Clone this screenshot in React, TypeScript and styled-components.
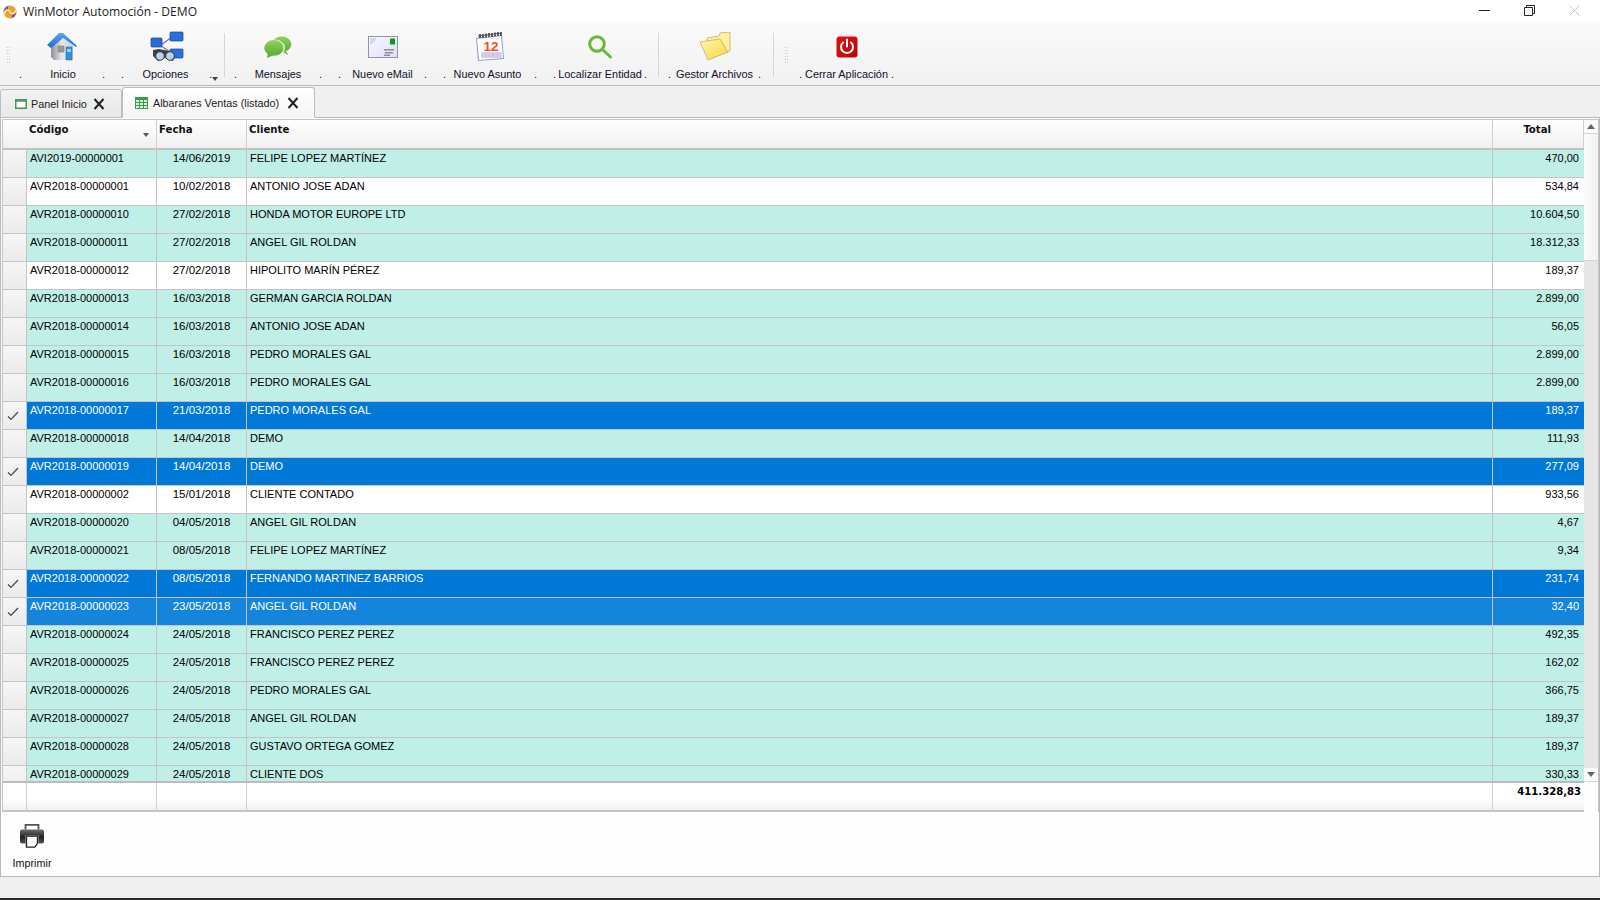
import React from "react";
import styled, { createGlobalStyle, css } from "styled-components";

const Global = createGlobalStyle`
  html, body { margin: 0; padding: 0; background: #f0f0f0; }
  * { box-sizing: border-box; }
`;

const UI = `"Liberation Sans", Arial, sans-serif`;
const BOLD = `"DejaVu Sans Condensed", "DejaVu Sans", sans-serif`;
const columns = css`
  display: grid;
  grid-template-columns: 24px 130px 90px 1fr 91px;
`;

const Page = styled.div`
  width: 1600px; height: 900px; overflow: hidden;
  display: flex; flex-direction: column;
  background: #f0f0f0; color: #000;
  font: 11px/16px ${UI};
`;
const TitleBar = styled.div`
  height: 23px; flex: none; background: #fff;
  display: flex; align-items: center; padding-left: 3px;
`;
const TitleText = styled.span`
  margin-left: 6px; font: 12.1px/16px "Open Sans", sans-serif; color: #222;
`;
const WindowControls = styled.div`
  margin-left: auto; display: flex; align-items: center; height: 100%;
  padding-right: 20px; gap: 34px; padding-bottom: 3px;
`;
const Toolbar = styled.div`
  height: 63px; flex: none;
  display: flex; align-items: flex-start;
  background: linear-gradient(#fafafa, #f1f1f1);
  border-bottom: 1px solid #b9b9b9;
`;
const Grip = styled.i<{ $left: number; $right: number }>`
  display: block; flex: none; width: 4px; height: 17px; margin: 23px ${p => p.$right}px 0 ${p => p.$left}px;
  background-image: radial-gradient(#bdbdbd 0.7px, transparent 0.8px);
  background-size: 2.5px 3px;
`;
const ToolGroup = styled.div`
  display: flex; gap: 16px;
`;
const ToolButton = styled.div<{ $w: number }>`
  width: ${p => p.$w}px; flex: none; padding-top: 8px;
  display: flex; flex-direction: column; align-items: center;
`;
const ToolIcon = styled.div`
  height: 32px; display: flex; align-items: center; justify-content: center;
`;
const ToolLabel = styled.div`
  margin-top: 4px; width: 100%; display: flex; justify-content: space-between;
  line-height: 14px; color: #10102a; white-space: nowrap; font-size: 10.9px;
`;
const ToolName = styled.span<{ $pl?: number; $pr?: number }>`
  padding: 0 ${p => p.$pr || 0}px 0 ${p => p.$pl || 0}px;
`;
const MenuArrow = styled.i`
  flex: none; width: 0; height: 0; margin: 54px 0 0 0;
  border-left: 3.5px solid transparent; border-right: 3.5px solid transparent;
  border-top: 4px solid #444;
`;
const ToolSep = styled.i<{ $l: number; $r: number }>`
  flex: none; width: 1px; height: 44px; margin: 10px ${p => p.$r}px 0 ${p => p.$l}px; background: #d6d6d6;
`;
const TabStrip = styled.div`
  height: 32px; flex: none; display: flex; align-items: flex-end; margin-bottom: -1px;
  position: relative; z-index: 1;
`;
const Tab = styled.div<{ $active?: boolean }>`
  display: flex; align-items: center; flex: none;
  height: ${p => (p.$active ? 31 : 29)}px;
  width: ${p => (p.$active ? 193 : 122)}px;
  padding-left: ${p => (p.$active ? 12 : 14)}px;
  gap: ${p => (p.$active ? 5 : 4)}px;
  border: 1px solid #bdbdbd; border-radius: 3px 3px 0 0;
  border-bottom: ${p => (p.$active ? "1px solid #f6f6f6" : "1px solid #bdbdbd")};
  background: ${p => (p.$active ? "linear-gradient(#ffffff, #f5f5f5)" : "linear-gradient(#f2f2f2, #e8e8e8)")};
  color: #222; font-size: 10.8px;
`;
const TabClose = styled.svg<{ $m: number }>`
  margin-left: ${p => p.$m}px; flex: none;
`;
const Panel = styled.div`
  flex: none; height: 760px; background: #fdfdfd;
  border: 1px solid #b9b9b9;
  display: flex; flex-direction: column;
`;
const GridFrame = styled.div`
  margin: 1px 0 0 1px; height: 693px; flex: none;
  border: 1px solid #c4c4c4; border-bottom: none;
  display: flex; flex-direction: column;
`;
const GridMain = styled.div`
  display: flex; flex: none; height: 661px;
`;
const GridTable = styled.div`
  width: 1581px; flex: none; display: flex; flex-direction: column;
`;
const HeaderRow = styled.div`
  ${columns}; height: 30px; flex: none;
  background: linear-gradient(#ffffff, #f0f0f0);
  border-bottom: 2px solid #c2c2c2;
  font: 700 11.3px/16px ${BOLD}; color: #111;
`;
const HeaderCell = styled.div<{ $span?: boolean; $right?: boolean }>`
  position: relative; padding: 2px 2px 0; border-right: 1px solid #cfcfcf;
  ${p => p.$span && "grid-column: span 2; padding-left: 26px;"}
  ${p => p.$right && "text-align: right; padding-right: 32px;"}
`;
const SortMark = styled.i`
  position: absolute; right: 7px; top: 13px; width: 0; height: 0;
  border-left: 3.5px solid transparent; border-right: 3.5px solid transparent;
  border-top: 4px solid #555;
`;
const RowsClip = styled.div`
  flex: none; height: 631px; overflow: hidden;
`;
const Row = styled.div<{ $kind: "teal" | "white" | "sel" | "cur" }>`
  ${columns}; height: 28px;
  border-bottom: 1px solid #c4c4c4;
  color: ${p => (p.$kind === "sel" || p.$kind === "cur" ? "#fff" : "#000")};
  background: ${p =>
    p.$kind === "teal" ? "#bfefe7" : p.$kind === "white" ? "#fff" : p.$kind === "sel" ? "#0078d7" : "#1585dc"};
`;
const RowHead = styled.div`
  background: linear-gradient(#f6f6f6, #ebebeb);
  border-right: 1px solid #c4c4c4;
  display: flex; align-items: center; justify-content: center; padding-right: 3px;
`;
const Cell = styled.div<{ $align?: "left" | "center" | "right" }>`
  padding: 0 3px; text-align: ${p => p.$align || "left"};
  border-right: 1px solid #c4c4c4; white-space: nowrap; overflow: hidden;
  ${p => p.$align === "right" && "padding-right: 5px; border-right: none;"}
  ${p => p.$align === "center" && "font-size: 11.5px;"}
  line-height: 17px;
`;
const FooterRow = styled.div`
  ${columns}; height: 31px; flex: none;
  border-top: 2px solid #bcbcbc; border-bottom: 2px solid #c4c4c4;
  background: linear-gradient(#ffffff 60%, #f0f0f0);
`;
const FooterCell = styled.div<{ $total?: boolean }>`
  border-right: 1px solid #cfcfcf;
  ${p => p.$total && `border-right: none; text-align: right; padding: 1px 3px 0 0; font: 700 11.2px/16px ${BOLD};`}
`;
const ScrollBar = styled.div`
  width: 14px; flex: none; height: 662px; display: flex; flex-direction: column; background: #e6e6e6;
`;
const ScrollButton = styled.div<{ $down?: boolean }>`
  height: 14px; flex: none; background: #fbfbfb; border-bottom: 1px solid #d4d4d4;
  display: flex; align-items: center; justify-content: center;
  &::before {
    content: ""; width: 0; height: 0;
    border-left: 4px solid transparent; border-right: 4px solid transparent;
    ${p => (p.$down ? "border-top: 5px solid #666;" : "border-bottom: 5px solid #666;")}
  }
`;
const ScrollThumb = styled.div`
  height: 127px; flex: none; background: linear-gradient(90deg, #fbfbfb, #f1f1f1); border-bottom: 1px solid #d4d4d4;
`;
const ScrollTrack = styled.div`
  flex: 1;
`;
const PrintBar = styled.div`
  flex: 1; padding: 12px 0 0 1px;
`;
const PrintButton = styled.div`
  width: 60px; display: flex; flex-direction: column; align-items: center; color: #111;
`;
const PrintLabel = styled.div`
  margin-top: 8px; line-height: 14px; font-size: 10.8px;
`;
const StatusGap = styled.div`
  flex: 1;
`;
const TaskEdge = styled.div`
  height: 2px; flex: none; background: #2a2a2a;
`;

const Logo = () => (
  <svg width="14" height="14" viewBox="0 0 14 14">
    <circle cx="7" cy="7" r="6.5" fill="#f0a030" />
    <path d="M7 .5A6.5 6.5 0 0 0 .5 7c2-3 3-3 4.500-1V.8z" fill="#6d5aa8" />
    <path d="M7 13.500A6.500 6.500 0 0 0 13.500 7c-2 3-3 3-4.500 1v5.200z" fill="#6d5aa8" />
    <path d="M1 9c2-5 4-5 6-2s4 2 6-2" stroke="#fff2c0" strokeWidth="1.300" fill="none" />
  </svg>
);

const HomeIcon = () => (
  <svg width="32" height="30" viewBox="0 0 32 30">
    <defs>
      <linearGradient id="hw" x1="0" x2="1"><stop offset="0" stopColor="#8b9097" /><stop offset=".5" stopColor="#e8e8e8" /><stop offset="1" stopColor="#c4c8cc" /></linearGradient>
      <linearGradient id="hr" x1="0" x2="0" y1="0" y2="1"><stop offset="0" stopColor="#5aa8f0" /><stop offset="1" stopColor="#1a6cc8" /></linearGradient>
    </defs>
    <path d="M5 14 16 5l11 9v14H8l-3-3z" fill="url(#hw)" />
    <path d="M1 13 13 1h4l14 13-1 1L17 6 5 16z" fill="url(#hr)" />
    <rect x="12" y="14" width="6" height="6" fill="#9a9a9a" stroke="#777" strokeWidth=".5" />
    <rect x="20" y="15" width="6" height="13" fill="#2d8fdc" stroke="#1c6fb0" strokeWidth=".5" />
    <rect x="21" y="17" width="4" height="3" fill="#9ad0f6" />
  </svg>
);
const OptionsIcon = () => (
  <svg width="34" height="32" viewBox="0 0 34 32">
    <path d="M11 14 22 6M11 15 22 22" stroke="#7a78b0" strokeWidth="1.400" />
    <rect x="1" y="7" width="11" height="9" rx="1" fill="#2a6bd8" stroke="#173f90" strokeWidth=".7" />
    <rect x="20" y="1" width="13" height="9" rx="1" fill="#2a70e0" stroke="#173f90" strokeWidth=".7" />
    <rect x="20" y="18" width="13" height="9" rx="1" fill="#2a70e0" stroke="#173f90" strokeWidth=".7" />
    <path d="M3 19 9 18 19 20 25 26 23 30 15 27 8 30 3 25z" fill="#3f3f3f" />
    <circle cx="10" cy="25" r="4.300" fill="#b9d2ee" stroke="#3a3a3a" />
    <circle cx="20" cy="25" r="4.300" fill="#b9d2ee" stroke="#3a3a3a" />
  </svg>
);
const ChatIcon = () => (
  <svg width="30" height="24" viewBox="0 0 32 26">
    <defs><linearGradient id="cg" x1="0" x2="0" y1="0" y2="1"><stop offset="0" stopColor="#8fd35a" /><stop offset="1" stopColor="#58ab32" /></linearGradient></defs>
    <ellipse cx="20" cy="10" rx="10.500" ry="8.500" fill="url(#cg)" />
    <path d="M23 16l4 5-1 .5-6-4z" fill="#6cbb3f" />
    <ellipse cx="12" cy="14" rx="11.500" ry="9" fill="#fff" opacity=".85" />
    <ellipse cx="11.500" cy="14" rx="10.500" ry="8.500" fill="url(#cg)" />
    <path d="M5 20l-1 5 7-3z" fill="#62b238" />
  </svg>
);
const MailIcon = () => (
  <svg width="30" height="22" viewBox="0 0 30 22">
    <defs><linearGradient id="mg" x1="0" x2="1" y1="0" y2="1"><stop offset="0" stopColor="#fbfbff" /><stop offset="1" stopColor="#dcdcf6" /></linearGradient></defs>
    <rect x=".5" y=".5" width="29" height="21" fill="url(#mg)" stroke="#9292b8" />
    <rect x="22" y="2.500" width="5" height="6" fill="#0c9a1c" />
    <path d="M2 3h6M2 5h5M2 7h3" stroke="#b8b8c0" />
    <path d="M16 13h10v1.500H16zM17 16h8v1.500h-8zM16 18.500h6V20h-6z" fill="#8e8e8e" />
  </svg>
);
const CalendarIcon = () => (
  <svg width="30" height="30" viewBox="0 0 30 30">
    <path d="M1 6 27 3l2 24-26 2z" fill="#9a9ac8" />
    <path d="M2 7 26 4l2 22-24 2z" fill="#fff" />
    <path d="M5 6V2M8 6V2M11 5.500v-4M14 5v-4M17 5v-4M20 4.500v-4M23 4v-4M26 4V0" stroke="#333" strokeWidth="1.500" />
    <path d="M3 4l24-3" stroke="#555" strokeWidth="1" />
    <rect x="6" y="20" width="21" height="6" fill="#d8d8f2" />
    <path d="M6 22h20M6 24h20M10 20v6M14 20v6M18 20v6M22 20v6" stroke="#b0a8c8" strokeWidth=".4" />
    <text x="16" y="19" textAnchor="middle" fontFamily='"Liberation Sans", sans-serif' fontWeight="700" fontSize="13.500" fill="#f0500c">12</text>
  </svg>
);
const SearchIcon = () => (
  <svg width="26" height="26" viewBox="0 0 26 26">
    <circle cx="10" cy="10" r="7.300" fill="none" stroke="#66b93a" strokeWidth="3" />
    <path d="M15.500 15.500 23.500 23" stroke="#66b93a" strokeWidth="3" strokeLinecap="round" />
  </svg>
);
const FolderIcon = () => (
  <svg width="32" height="30" viewBox="0 0 32 30">
    <defs><linearGradient id="fg" x1="0" x2="1" y1="0" y2="1"><stop offset="0" stopColor="#fff8b0" /><stop offset="1" stopColor="#f6d53c" /></linearGradient></defs>
    <path d="M8 6 20 4l1-3 10-1v19L10 27z" fill="#fdf0a0" stroke="#c9ae5a" strokeWidth=".8" />
    <path d="M1 10 21 7l8 13-20 8z" fill="url(#fg)" stroke="#c9ae5a" strokeWidth=".8" />
  </svg>
);
const PowerIcon = () => (
  <svg width="22" height="22" viewBox="0 0 22 22">
    <defs><linearGradient id="pg" x1="0" x2="1" y1="0" y2="1"><stop offset="0" stopColor="#e41010" /><stop offset="1" stopColor="#b80808" /></linearGradient></defs>
    <rect x=".5" y=".5" width="21" height="21" rx="3" fill="url(#pg)" />
    <path d="M7 6.500a6 6 0 1 0 8 0" fill="none" stroke="#fff" strokeWidth="2" strokeLinecap="round" />
    <path d="M11 3.500v7" stroke="#fff" strokeWidth="2" strokeLinecap="round" />
  </svg>
);
const PrinterIcon = () => (
  <svg width="26" height="24" viewBox="0 0 28 26">
    <defs><linearGradient id="prg" x1="0" x2="0" y1="0" y2="1"><stop offset="0" stopColor="#6c6c6c" /><stop offset=".55" stopColor="#222" /><stop offset="1" stopColor="#555" /></linearGradient></defs>
    <path d="M7 6V1h14v5" fill="#fff" stroke="#555" strokeWidth="2" />
    <path d="M3 6h22a2 2 0 0 1 2 2v11a2 2 0 0 1-2 2h-4V12H7v9H3a2 2 0 0 1-2-2V8a2 2 0 0 1 2-2z" fill="url(#prg)" />
    <path d="M8 13h12v8l-3 4H8z" fill="#fff" stroke="#222" strokeWidth="1.500" />
  </svg>
);
const PanelTabIcon = () => (
  <svg width="12" height="10" viewBox="0 0 12 10">
    <rect x=".75" y=".75" width="10.500" height="8.500" fill="#fff" stroke="#3f9a50" strokeWidth="1.500" />
    <path d="M1 2h10" stroke="#3f9a50" strokeWidth="1.500" />
  </svg>
);
const GridTabIcon = () => (
  <svg width="13" height="12" viewBox="0 0 13 12">
    <rect width="13" height="12" fill="#3f9a50" />
    <path d="M1 3h3v2H1zM5 3h3v2H5zM9 3h3v2H9zM1 6h3v2H1zM5 6h3v2H5zM9 6h3v2H9zM1 9h3v2H1zM5 9h3v2H5zM9 9h3v2H9z" fill="#d8f0dc" />
  </svg>
);
const CloseMark = ({ m }: { m: number }) => (
  <TabClose $m={m} width="12" height="12" viewBox="0 0 12 12">
    <path d="M1.500 1 10.500 11M10.500 1 1.500 11" stroke="#222" strokeWidth="2" />
  </TabClose>
);
const Check = () => (
  <svg width="12" height="10" viewBox="0 0 12 10">
    <path d="M1 5.500 4 8.500 11 1" fill="none" stroke="#444" strokeWidth="1.200" />
  </svg>
);

type Kind = "teal" | "white" | "sel" | "cur";
const rows: [string, string, string, string, Kind, boolean?][] = [
  ["AVI2019-00000001", "14/06/2019", "FELIPE LOPEZ MARTÍNEZ", "470,00", "teal"],
  ["AVR2018-00000001", "10/02/2018", "ANTONIO JOSE ADAN", "534,84", "white"],
  ["AVR2018-00000010", "27/02/2018", "HONDA MOTOR EUROPE LTD", "10.604,50", "teal"],
  ["AVR2018-00000011", "27/02/2018", "ANGEL GIL ROLDAN", "18.312,33", "teal"],
  ["AVR2018-00000012", "27/02/2018", "HIPOLITO MARÍN PÉREZ", "189,37", "white"],
  ["AVR2018-00000013", "16/03/2018", "GERMAN GARCIA ROLDAN", "2.899,00", "teal"],
  ["AVR2018-00000014", "16/03/2018", "ANTONIO JOSE ADAN", "56,05", "teal"],
  ["AVR2018-00000015", "16/03/2018", "PEDRO MORALES GAL", "2.899,00", "teal"],
  ["AVR2018-00000016", "16/03/2018", "PEDRO MORALES GAL", "2.899,00", "teal"],
  ["AVR2018-00000017", "21/03/2018", "PEDRO MORALES GAL", "189,37", "sel", true],
  ["AVR2018-00000018", "14/04/2018", "DEMO", "111,93", "teal"],
  ["AVR2018-00000019", "14/04/2018", "DEMO", "277,09", "sel", true],
  ["AVR2018-00000002", "15/01/2018", "CLIENTE CONTADO", "933,56", "white"],
  ["AVR2018-00000020", "04/05/2018", "ANGEL GIL ROLDAN", "4,67", "teal"],
  ["AVR2018-00000021", "08/05/2018", "FELIPE LOPEZ MARTÍNEZ", "9,34", "teal"],
  ["AVR2018-00000022", "08/05/2018", "FERNANDO MARTINEZ BARRIOS", "231,74", "sel", true],
  ["AVR2018-00000023", "23/05/2018", "ANGEL GIL ROLDAN", "32,40", "cur", true],
  ["AVR2018-00000024", "24/05/2018", "FRANCISCO PEREZ PEREZ", "492,35", "teal"],
  ["AVR2018-00000025", "24/05/2018", "FRANCISCO PEREZ PEREZ", "162,02", "teal"],
  ["AVR2018-00000026", "24/05/2018", "PEDRO MORALES GAL", "366,75", "teal"],
  ["AVR2018-00000027", "24/05/2018", "ANGEL GIL ROLDAN", "189,37", "teal"],
  ["AVR2018-00000028", "24/05/2018", "GUSTAVO ORTEGA GOMEZ", "189,37", "teal"],
  ["AVR2018-00000029", "24/05/2018", "CLIENTE DOS", "330,33", "teal"],
];

const Tool = ({ w, label, icon, pl, pr }: { w: number; label: string; icon: React.ReactNode; pl?: number; pr?: number }) => (
  <ToolButton $w={w}>
    <ToolIcon>{icon}</ToolIcon>
    <ToolLabel><span>.</span><ToolName $pl={pl} $pr={pr}>{label}</ToolName><span>.</span></ToolLabel>
  </ToolButton>
);

export default function App() {
  return (
    <Page>
      <Global />
      <TitleBar>
        <Logo />
        <TitleText>WinMotor Automoción - DEMO</TitleText>
        <WindowControls>
          <svg width="11" height="11" viewBox="0 0 11 11"><path d="M0 5.500h11" stroke="#222" /></svg>
          <svg width="11" height="11" viewBox="0 0 11 11"><path d="M.5 2.500h8v8h-8zM2.500 2.500v-2h8v8h-2" fill="none" stroke="#222" /></svg>
          <svg width="11" height="11" viewBox="0 0 11 11"><path d="M.5.500l10 10M10.500.500l-10 10" stroke="#c4c4c4" /></svg>
        </WindowControls>
      </TitleBar>
      <Toolbar>
        <Grip $left={6} $right={9} />
        <ToolGroup>
          <Tool w={86} label="Inicio" icon={<HomeIcon />} pl={2} />
          <Tool w={91} label="Opciones" icon={<OptionsIcon />} pr={2} />
        </ToolGroup>
        <MenuArrow />
        <ToolSep $l={6} $r={9} />
        <ToolGroup>
          <Tool w={88} label="Mensajes" icon={<ChatIcon />} />
          <Tool w={89} label="Nuevo eMail" icon={<MailIcon />} />
          <Tool w={94} label="Nuevo Asunto" icon={<CalendarIcon />} pr={5} />
          <Tool w={94} label="Localizar Entidad" icon={<SearchIcon />} />
        </ToolGroup>
        <ToolSep $l={11} $r={9} />
        <Tool w={93} label="Gestor Archivos" icon={<FolderIcon />} />
        <ToolSep $l={12} $r={10} />
        <Grip $left={0} $right={11} />
        <Tool w={95} label="Cerrar Aplicación" icon={<PowerIcon />} />
      </Toolbar>
      <TabStrip>
        <Tab><PanelTabIcon /><span>Panel Inicio</span><CloseMark m={2} /></Tab>
        <Tab $active><GridTabIcon /><span>Albaranes Ventas (listado)</span><CloseMark m={3} /></Tab>
      </TabStrip>
      <Panel>
        <GridFrame>
          <GridMain>
            <GridTable>
              <HeaderRow>
                <HeaderCell $span>Código<SortMark /></HeaderCell>
                <HeaderCell>Fecha</HeaderCell>
                <HeaderCell>Cliente</HeaderCell>
                <HeaderCell $right>Total</HeaderCell>
              </HeaderRow>
              <RowsClip>
                {rows.map(r => (
                  <Row key={r[0]} $kind={r[4]}>
                    <RowHead>{r[5] && <Check />}</RowHead>
                    <Cell>{r[0]}</Cell>
                    <Cell $align="center">{r[1]}</Cell>
                    <Cell>{r[2]}</Cell>
                    <Cell $align="right">{r[3]}</Cell>
                  </Row>
                ))}
              </RowsClip>
            </GridTable>
            <ScrollBar>
              <ScrollButton />
              <ScrollThumb />
              <ScrollTrack />
              <ScrollButton $down />
            </ScrollBar>
          </GridMain>
          <GridTable>
            <FooterRow>
              <FooterCell /><FooterCell /><FooterCell /><FooterCell />
              <FooterCell $total>411.328,83</FooterCell>
            </FooterRow>
          </GridTable>
        </GridFrame>
        <PrintBar>
          <PrintButton>
            <PrinterIcon />
            <PrintLabel>Imprimir</PrintLabel>
          </PrintButton>
        </PrintBar>
      </Panel>
      <StatusGap />
      <TaskEdge />
    </Page>
  );
}
